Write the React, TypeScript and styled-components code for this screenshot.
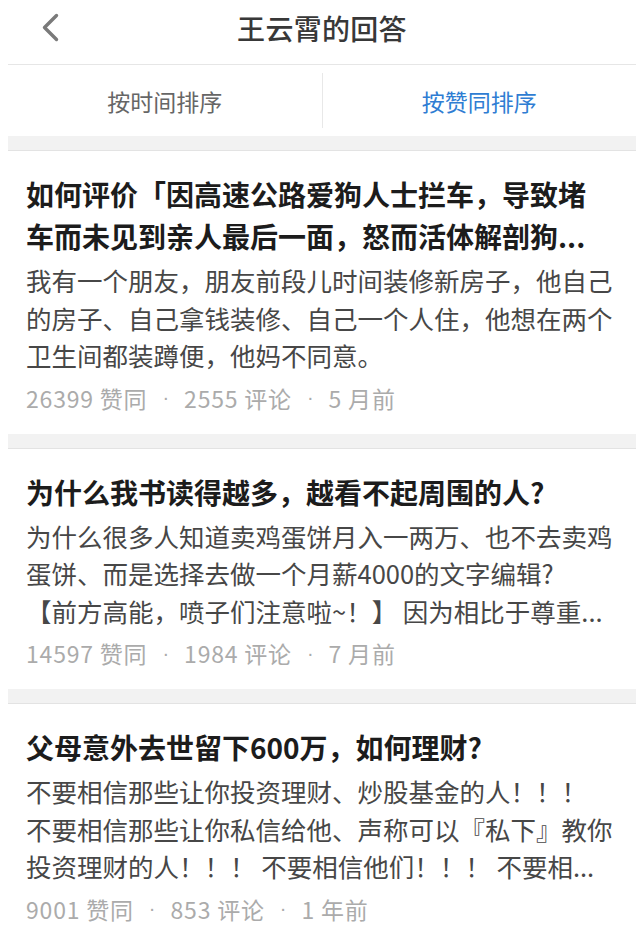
import React from "react";
import styled, { createGlobalStyle } from "styled-components";

const GlobalStyle = createGlobalStyle`
  html, body {
    margin: 0;
    padding: 0;
    background: #ffffff;
  }
  body {
    font-family: "Noto Sans CJK SC", "Noto Sans", "Liberation Sans", sans-serif;
    -webkit-font-smoothing: antialiased;
  }
`;

const Page = styled.div`
  width: 628px;
  margin-left: 8px;
  background: #ffffff;
`;

const Header = styled.header`
  position: relative;
  height: 64px;
  display: flex;
  align-items: center;
  justify-content: center;
  border-bottom: 1px solid #e6e6e6;
`;

const BackButton = styled.button`
  position: absolute;
  left: 23px;
  top: 10px;
  width: 40px;
  height: 34px;
  padding: 0;
  border: none;
  background: transparent;
  display: flex;
  align-items: center;
  justify-content: center;
`;

const HeaderTitle = styled.h1`
  margin: 0;
  margin-top: -8px;
  font-size: 28px;
  font-weight: 500;
  color: #383838;
  letter-spacing: 0.3px;
`;

const TabBar = styled.nav`
  height: 71px;
  display: flex;
  align-items: center;
`;

const Tab = styled.div<{ $active?: boolean }>`
  flex: 1;
  text-align: center;
  font-size: 23px;
  font-weight: 400;
  color: ${(p) => (p.$active ? "#2f7dd3" : "#666666")};
`;

const TabDivider = styled.div`
  width: 1px;
  height: 55px;
  background: #e8e8e8;
`;

const Gap = styled.div`
  height: 14px;
  background: #f2f2f2;
  border-bottom: 1px solid #e3e3e3;
`;

const Card = styled.article`
  padding: 22px 20px 21px 18px;
`;

const Title = styled.h2`
  margin: 0 0 4px 0;
  font-size: 28px;
  line-height: 42px;
  font-weight: 700;
  color: #1c1c1c;
`;

const Excerpt = styled.p`
  margin: 0 0 9px 0;
  font-size: 25.5px;
  line-height: 37.5px;
  color: #474747;
  white-space: nowrap;
`;

const Meta = styled.div`
  display: flex;
  align-items: center;
  height: 30px;
  font-size: 23px;
  color: #ababab;
`;

const MetaValue = styled.span`
  letter-spacing: 0.8px;
`;

const MetaDot = styled.span`
  margin: 0 15px;
  font-family: "Liberation Sans", sans-serif;
  font-size: 20px;
`;

type Answer = {
  title: string[];
  excerpt: string[];
  votes: string;
  comments: string;
  time: string;
};

const answers: Answer[] = [
  {
    title: [
      "如何评价「因高速公路爱狗人士拦车，导致堵",
      "车而未见到亲人最后一面，怒而活体解剖狗...",
    ],
    excerpt: [
      "我有一个朋友，朋友前段儿时间装修新房子，他自己",
      "的房子、自己拿钱装修、自己一个人住，他想在两个",
      "卫生间都装蹲便，他妈不同意。",
    ],
    votes: "26399",
    comments: "2555",
    time: "5 月前",
  },
  {
    title: ["为什么我书读得越多，越看不起周围的人?"],
    excerpt: [
      "为什么很多人知道卖鸡蛋饼月入一两万、也不去卖鸡",
      "蛋饼、而是选择去做一个月薪4000的文字编辑?",
      "【前方高能，喷子们注意啦~！】 因为相比于尊重...",
    ],
    votes: "14597",
    comments: "1984",
    time: "7 月前",
  },
  {
    title: ["父母意外去世留下600万，如何理财?"],
    excerpt: [
      "不要相信那些让你投资理财、炒股基金的人！！！",
      "不要相信那些让你私信给他、声称可以『私下』教你",
      "投资理财的人！！！ 不要相信他们！！！ 不要相...",
    ],
    votes: "9001",
    comments: "853",
    time: "1 年前",
  },
];

function withBreaks(lines: string[]) {
  return lines.map((line, i) => (
    <React.Fragment key={i}>
      {line}
      {i < lines.length - 1 && <br />}
    </React.Fragment>
  ));
}

export default function App() {
  return (
    <>
      <GlobalStyle />
      <Page>
        <Header>
          <BackButton aria-label="返回">
            <svg width="20" height="30" viewBox="0 0 20 30">
              <polyline
                points="15.5,3.5 3.5,15.5 15.5,27.5"
                fill="none"
                stroke="#7a7a7a"
                strokeWidth="3.4"
                strokeLinecap="round"
                strokeLinejoin="round"
              />
            </svg>
          </BackButton>
          <HeaderTitle>王云霄的回答</HeaderTitle>
        </Header>
        <TabBar>
          <Tab>按时间排序</Tab>
          <TabDivider />
          <Tab $active>按赞同排序</Tab>
        </TabBar>
        {answers.map((a, i) => (
          <React.Fragment key={i}>
            <Gap />
            <Card>
              <Title>{withBreaks(a.title)}</Title>
              <Excerpt>{withBreaks(a.excerpt)}</Excerpt>
              <Meta>
                <MetaValue>{a.votes} 赞同</MetaValue>
                <MetaDot>·</MetaDot>
                <MetaValue>{a.comments} 评论</MetaValue>
                <MetaDot>·</MetaDot>
                <MetaValue>{a.time}</MetaValue>
              </Meta>
            </Card>
          </React.Fragment>
        ))}
      </Page>
    </>
  );
}
